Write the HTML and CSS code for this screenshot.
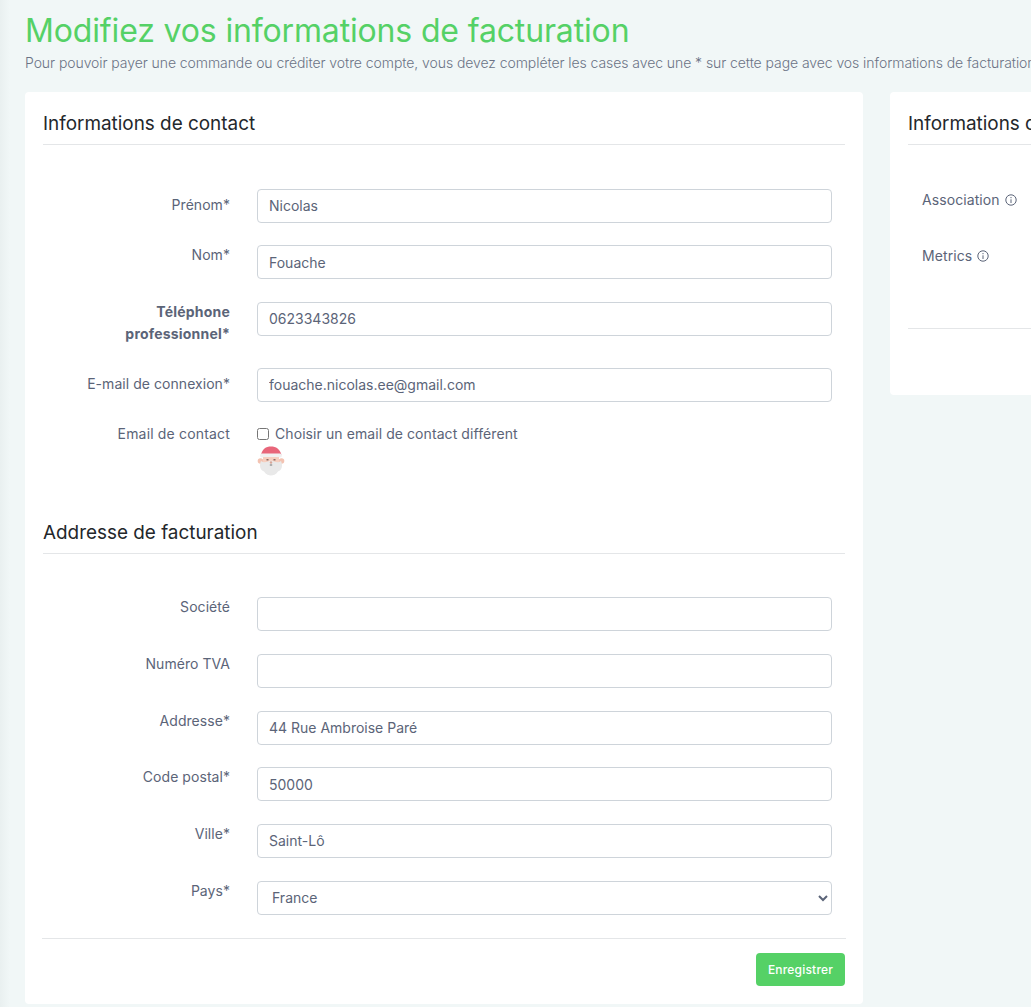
FILE: index.html
```html
<!DOCTYPE html>
<html lang="fr">
<head>
<meta charset="utf-8">
<title>Modifiez vos informations de facturation</title>
<link rel="stylesheet" href="styles.css">
</head>
<body>
<main class="page">
  <h1 class="title">Modifiez vos informations de facturation</h1>
  <p class="intro">Pour pouvoir payer une commande ou créditer votre compte, vous devez compléter les cases avec une * sur cette page avec vos informations de facturation.</p>
  <div class="columns">
    <form class="card card-main">
      <h2 class="section-title">Informations de contact</h2>
      <div class="rows">
        <div class="row"><label class="label label-mid">Prénom*</label><input class="field" value="Nicolas"></div>
        <div class="row"><label class="label">Nom*</label><input class="field" value="Fouache"></div>
        <div class="row row-tall"><label class="label label-bold">Téléphone professionnel*</label><input class="field" value="0623343826"></div>
        <div class="row"><label class="label label-mid">E-mail de connexion*</label><input class="field" value="fouache.nicolas.ee@gmail.com"></div>
        <div class="row row-check">
          <label class="label">Email de contact</label>
          <div class="check-col">
            <label class="check"><input type="checkbox" class="checkbox"><span>Choisir un email de contact différent</span></label>
            <svg class="santa" viewBox="0 0 28 30" width="28" height="30" aria-hidden="true">
              <circle cx="3.500" cy="15" r="2.800" fill="#f3c3b2"/>
              <circle cx="24.500" cy="15" r="2.800" fill="#f3c3b2"/>
              <path d="M4 9C5 3 9 .5 14 .5S23 3 24.500 9Z" fill="#e8667a"/>
              <rect x="3" y="7.500" width="22" height="4" rx="2" fill="#f1f1f1"/>
              <rect x="6" y="11" width="16" height="6" fill="#f6cfc0"/>
              <rect x="9.500" y="13" width="2" height="1.500" fill="#8a6b60"/>
              <rect x="16.500" y="13" width="2" height="1.500" fill="#8a6b60"/>
              <path d="M4 15C7 17 9 16 11 15.500L14 14.500L17 15.500C19 16 21 17 24 15C26 20 25 24 21 25.500C19 28.500 16 29.500 14 29.500S9 28.500 7 25.500C3 24 2 20 4 15Z" fill="#e9e9e9"/>
              <circle cx="14" cy="16.500" r="1.200" fill="#d9a79a"/>
              <rect x="12.800" y="18.500" width="2.400" height="1" fill="#777"/>
            </svg>
          </div>
        </div>
      </div>
      <h2 class="section-title">Addresse de facturation</h2>
      <div class="rows">
        <div class="row"><label class="label">Société</label><input class="field"></div>
        <div class="row"><label class="label">Numéro TVA</label><input class="field"></div>
        <div class="row"><label class="label">Addresse*</label><input class="field" value="44 Rue Ambroise Paré"></div>
        <div class="row"><label class="label">Code postal*</label><input class="field" value="50000"></div>
        <div class="row"><label class="label">Ville*</label><input class="field" value="Saint-Lô"></div>
        <div class="row"><label class="label">Pays*</label><select class="field field-select"><option>France</option></select></div>
      </div>
      <div class="card-footer"><button type="button" class="btn">Enregistrer</button></div>
    </form>
    <section class="card card-side">
      <h2 class="section-title">Informations de paiement</h2>
      <div class="side-rows">
        <div class="side-row">Association
          <svg class="info" viewBox="0 0 12 12" width="12" height="12" aria-hidden="true"><circle cx="6" cy="6" r="5.200" fill="none" stroke="currentColor"/><path d="M6 5.300V9M6 3V4.200" stroke="currentColor" fill="none"/></svg>
        </div>
        <div class="side-row">Metrics
          <svg class="info" viewBox="0 0 12 12" width="12" height="12" aria-hidden="true"><circle cx="6" cy="6" r="5.200" fill="none" stroke="currentColor"/><path d="M6 5.300V9M6 3V4.200" stroke="currentColor" fill="none"/></svg>
        </div>
      </div>
      <div class="side-foot"></div>
    </section>
  </div>
</main>
</body>
</html>
```

FILE: styles.css
```css
* { box-sizing: border-box; }
html, body { margin: 0; height: 100%; overflow: hidden; }
body {
  background: #f1f7f7;
  color: #5b6478;
  font-family: Inter, Roboto, "Liberation Sans", sans-serif;
  font-size: 14px;
}
.page {
  width: 1300px;
  height: 1007px;
  padding: 12px 0 0 25px;
  background: linear-gradient(to right, #e9f0f0 0, #f1f7f7 10px);
}
.title {
  margin: 0;
  color: #55d166;
  font-size: 32px;
  font-weight: 400;
  line-height: 38px;
  letter-spacing: -0.150px;
}
.intro {
  margin: 3px 0 0;
  color: #6b7385;
  font-size: 14px;
  font-weight: 300;
  line-height: 20px;
  letter-spacing: -0.070px;
  white-space: nowrap;
}
.columns {
  display: flex;
  align-items: flex-start;
  gap: 27px;
  margin-top: 19px;
}
.card {
  background: #fff;
  border-radius: 4px;
  padding: 18px;
}
.card-main { width: 838px; flex: none; height: 912px; }
.card-side { width: 400px; flex: none; height: 303px; }
.section-title {
  margin: 0;
  padding: 1px 0 7px;
  border-bottom: 1px solid #e4e6e8;
  color: #23272b;
  font-size: 18.900px;
  font-weight: 400;
  line-height: 26px;
}
.rows { padding: 43.600px 13px 0 0; }
.row {
  display: flex;
  gap: 27px;
  margin-bottom: 22.670px;
}
.row-tall { margin-bottom: 23px; }
.row-check { height: 54px; margin-top: -0.600px; margin-bottom: 40.800px; }
.label {
  flex: none;
  width: 187px;
  text-align: right;
  line-height: 22px;
  margin-top: -1px;
  letter-spacing: 0.050px;
}
.row-check .label { letter-spacing: 0.170px; }
.label-mid { margin-top: 5px; }
.label-bold { font-weight: 700; padding-left: 55px; letter-spacing: 0.200px; }
.field {
  flex: 1;
  min-width: 0;
  height: 34px;
  padding: 0 11px;
  border: 1px solid #ced4da;
  border-radius: 4px;
  background: #fff;
  color: #5b6478;
  font: inherit;
}
.field-select { padding-left: 10px; }
.check-col { display: flex; flex-direction: column; align-items: flex-start; }
.check { display: flex; align-items: center; gap: 6px; line-height: 22px; margin-top: -1px; letter-spacing: 0.080px; }
.checkbox { width: 12px; height: 12px; margin: 0; }
.santa { margin-top: 1px; }
.card-footer {
  margin: 23.670px -1px 0;
  padding-top: 14px;
  border-top: 1px solid #e4e6e8;
  display: flex;
  justify-content: flex-end;
  padding-right: 1px;
}
.btn {
  width: 89px;
  height: 33px;
  border: 0;
  border-radius: 4px;
  background: #55d166;
  color: #fff;
  font: inherit;
  font-size: 12px;
  font-weight: 500;
  letter-spacing: 0.200px;
}
.side-rows { padding: 45px 14px 0; }
.side-row { height: 56px; line-height: 22px; margin-top: -1px; margin-bottom: 1px; letter-spacing: 0.080px; }
.info { vertical-align: -1px; margin-left: 1px; }
.side-foot { margin-top: 27px; border-top: 1px solid #e4e6e8; }
```
